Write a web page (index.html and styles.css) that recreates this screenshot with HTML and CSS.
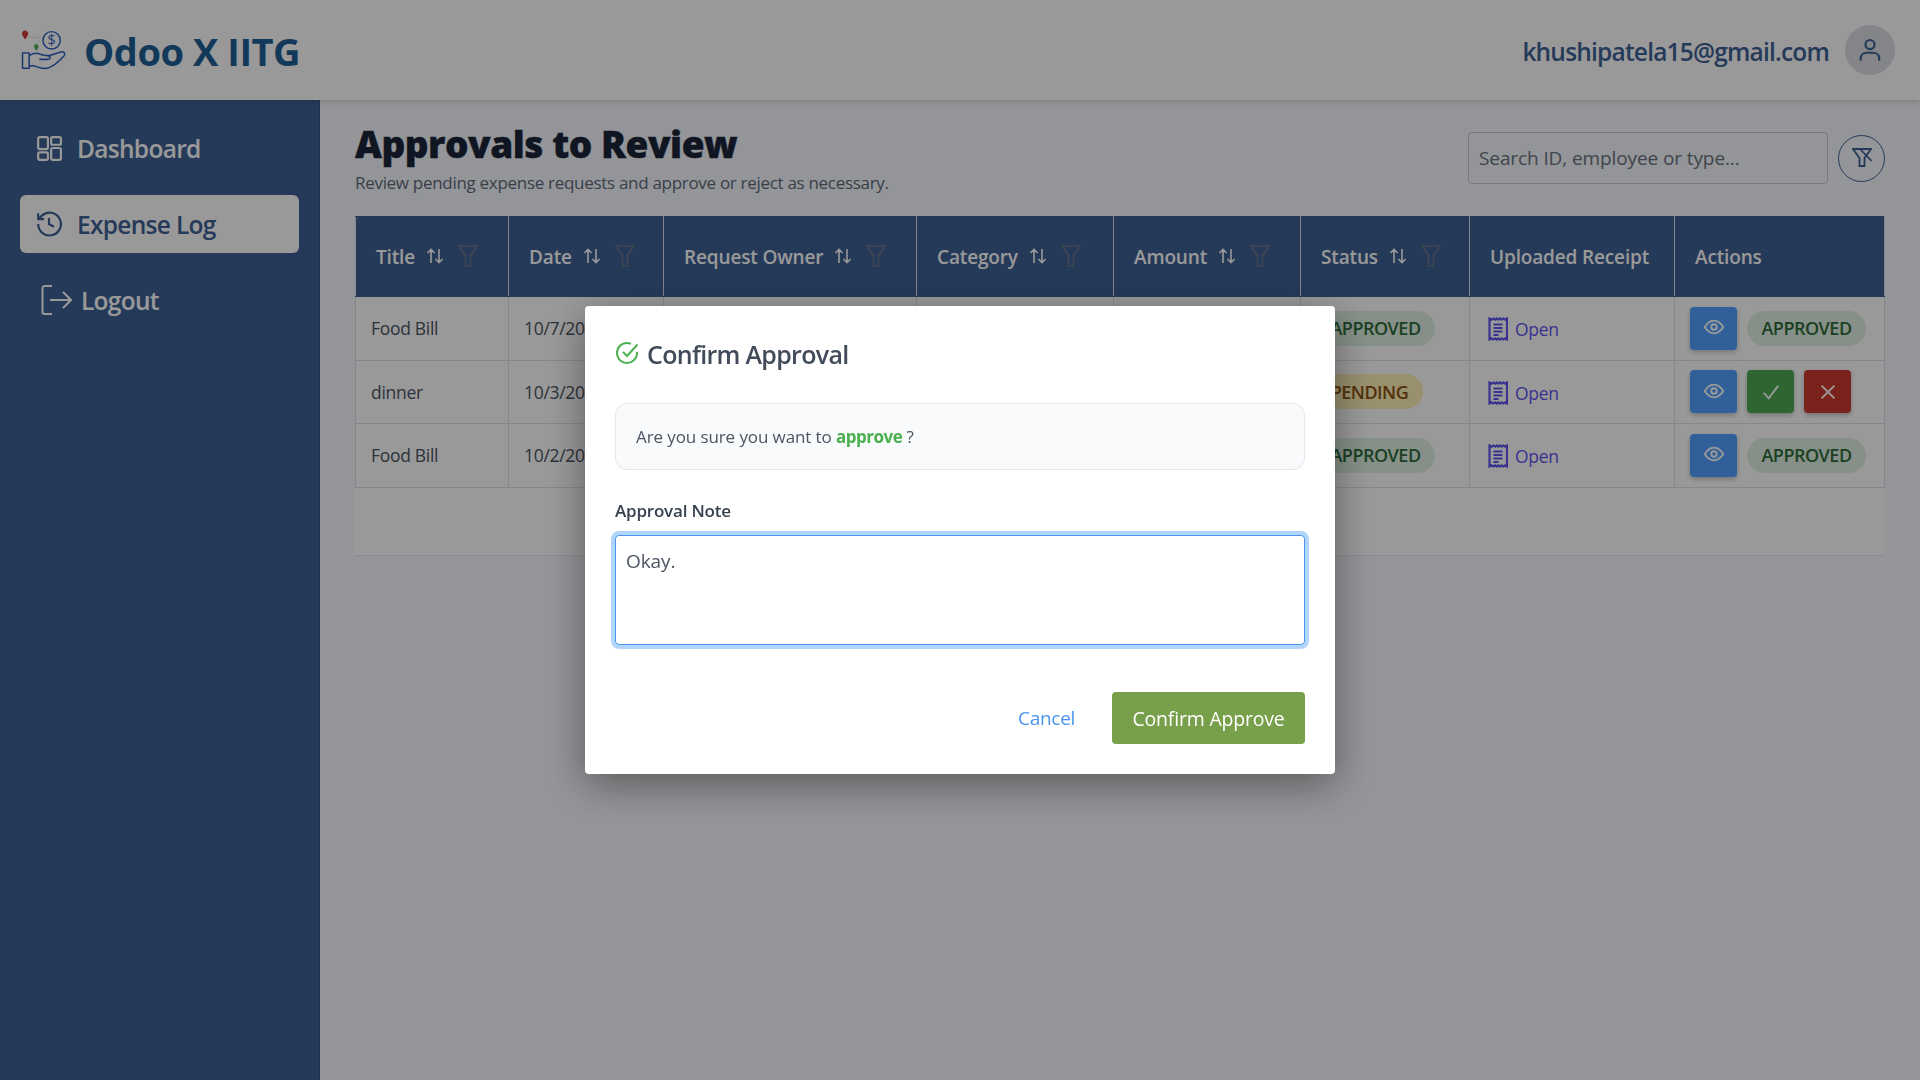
FILE: index.html
```html
<!DOCTYPE html>
<html lang="en">
<head>
<meta charset="utf-8">
<title>Approvals to Review</title>
<link rel="stylesheet" href="styles.css">
</head>
<body>
<svg class="sprite" width="0" height="0" aria-hidden="true">
  <defs>
    <symbol id="sort" viewBox="0 0 18 16"><path d="M5 15V1.500M1.500 5 5 1.500 8.500 5M13 1v13.500M9.500 11l3.500 3.500 3.500-3.500" fill="none" stroke="currentColor" stroke-width="1.600"/></symbol>
    <symbol id="funnel" viewBox="0 0 20 22"><path d="M1 1h18l-6.500 9.500V21h-5V10.500Z" fill="none" stroke="currentColor" stroke-width="1.500"/></symbol>
    <symbol id="receipt" viewBox="0 0 20 24"><path d="M1.500 1.500l2 1.200 2-1.200 2 1.200 1.500-1.200 1.500 1.200 1.500-1.200 1.500 1.200 2-1.200 2 1.200 1.500-1.200v21l-1.500-1.200-2 1.200-2-1.200-1.500 1.200-1.500-1.200-1.500 1.200-1.500-1.200-2 1.200-2-1.200-2 1.200Z" fill="none" stroke="currentColor" stroke-width="2.200"/><path d="M5.500 7.500h9M5.500 11h9M5.500 14.500h9M5.500 18h5" fill="none" stroke="currentColor" stroke-width="1.800"/></symbol>
    <symbol id="eye" viewBox="0 0 24 24"><path d="M2 12s3.500-7 10-7 10 7 10 7-3.500 7-10 7-10-7-10-7Z" fill="none" stroke="currentColor" stroke-width="2"/><circle cx="12" cy="12" r="3" fill="none" stroke="currentColor" stroke-width="2"/></symbol>
  </defs>
</svg>
<div class="app">
  <header class="topbar">
    <div class="brand">
      <svg class="logo" viewBox="0 0 48 44">
        <path d="M4 2.500c-1.800 0-3 1.300-3 3 0 2 3 5.500 3 5.500s3-3.500 3-5.500c0-1.700-1.200-3-3-3Z" transform="translate(0 -1)" fill="#d03a3a"/>
        <path d="M8 8h8.500c2.500 0 2.500 3 .5 4.500l-2.500 2c-1.500 1-1.500 2-1.500 3" fill="none" stroke="#c8c8c8" stroke-width=".8" stroke-dasharray="1.500 1"/>
        <path d="M15 16c-1.300 0-2.200.9-2.200 2.100 0 1.500 2.200 4 2.200 4s2.200-2.500 2.200-4c0-1.200-.9-2.100-2.200-2.100Z" transform="translate(0 -1)" fill="#4caf50"/>
        <circle cx="30" cy="11" r="8.500" fill="none" stroke="#3160c4" stroke-width="1.400"/>
        <text x="30" y="16" class="coin">$</text>
        <path d="M1.500 23.500h6.500v15H1.500ZM8 26c4-2.500 8-2.700 11-1.300 2.500 1.100 4.500 1.300 7.500 1.300 2.500 0 2.800 3.700 0 3.700h-8M26.500 26.500l12.500-4c3-1 5 1.500 3.200 3.700-3.500 4-9.500 9.500-14.500 11.600-4.500 1.800-9 .5-12.700-1-2.400-1-4.500-1-6-.6" fill="none" stroke="#3160c4" stroke-width="1.500" stroke-linejoin="round" stroke-linecap="round"/>
      </svg>
      <span class="brand-name">Odoo X IITG</span>
    </div>
    <div class="account">
      <span class="email">khushipatela15@gmail.com</span>
      <span class="avatar">
        <svg class="avatar-icon" viewBox="0 0 24 24"><circle cx="12" cy="7" r="4.200"/><path d="M3.500 22v-2.500c0-3 2.500-5 5.500-5h6c3 0 5.500 2 5.500 5V22"/></svg>
      </span>
    </div>
  </header>
  <div class="body-row">
    <aside class="sidebar">
      <nav class="nav">
        <a class="nav-item">
          <svg class="nav-icon" viewBox="0 0 24 24"><rect x="2" y="2" width="9" height="11" rx="1.500"/><rect x="14" y="2" width="9" height="7" rx="1.500"/><rect x="14" y="12" width="9" height="11" rx="1.500"/><rect x="2" y="16" width="9" height="7" rx="1.500"/></svg>
          Dashboard
        </a>
        <a class="nav-item nav-active">
          <svg class="nav-icon" viewBox="0 0 24 24"><path d="M2 12a10.500 10.500 0 1 0 3.200-7.500L2 7.500"/><path d="M2 2v5.500h5.500"/><path d="M12 6.500V12l4.500 2.500"/></svg>
          Expense Log
        </a>
        <a class="nav-item nav-logout">
          <svg class="logout-icon" viewBox="0 0 32 32"><path d="M12 2H4.500A2 2 0 0 0 2.500 4v24a2 2 0 0 0 2 2H12"/><path d="M10 16h21M23 8l8 8-8 8"/></svg>
          Logout
        </a>
      </nav>
    </aside>
    <main class="main">
      <div class="page-head">
        <div>
          <h1 class="page-title">Approvals to Review</h1>
          <p class="page-sub">Review pending expense requests and approve or reject as necessary.</p>
        </div>
        <div class="tools">
          <input class="search" type="text" placeholder="Search ID, employee or type...">
          <button class="filter-btn" type="button" aria-label="Clear filters">
            <svg class="filter-icon" viewBox="0 0 20 20"><path d="M1 1h18L12.500 10v8h-5v-8Z"/><path d="M8 1l11.500 12"/></svg>
          </button>
        </div>
      </div>
      <div class="table-card">
        <table class="grid">
          <colgroup>
            <col class="c-title"><col class="c-date"><col class="c-owner"><col class="c-cat"><col class="c-amt"><col class="c-status"><col class="c-receipt"><col class="c-actions">
          </colgroup>
          <thead>
            <tr>
              <th><span class="th-in">Title<svg class="i-sort"><use href="#sort"/></svg><svg class="i-funnel"><use href="#funnel"/></svg></span></th>
              <th><span class="th-in">Date<svg class="i-sort"><use href="#sort"/></svg><svg class="i-funnel"><use href="#funnel"/></svg></span></th>
              <th><span class="th-in">Request Owner<svg class="i-sort"><use href="#sort"/></svg><svg class="i-funnel"><use href="#funnel"/></svg></span></th>
              <th><span class="th-in">Category<svg class="i-sort"><use href="#sort"/></svg><svg class="i-funnel"><use href="#funnel"/></svg></span></th>
              <th><span class="th-in">Amount<svg class="i-sort"><use href="#sort"/></svg><svg class="i-funnel"><use href="#funnel"/></svg></span></th>
              <th><span class="th-in">Status<svg class="i-sort"><use href="#sort"/></svg><svg class="i-funnel"><use href="#funnel"/></svg></span></th>
              <th>Uploaded Receipt</th>
              <th>Actions</th>
            </tr>
          </thead>
          <tbody>
            <tr>
              <td>Food Bill</td><td>10/7/2025</td><td></td><td></td><td></td>
              <td class="td-status"><span class="pill pill-ok">APPROVED</span></td>
              <td class="td-receipt"><a class="open"><svg class="i-receipt"><use href="#receipt"/></svg>Open</a></td>
              <td class="td-actions"><div class="acts"><button class="act act-view" type="button"><svg class="i-eye"><use href="#eye"/></svg></button><span class="pill pill-ok">APPROVED</span></div></td>
            </tr>
            <tr>
              <td>dinner</td><td>10/3/2025</td><td></td><td></td><td></td>
              <td class="td-status"><span class="pill pill-wait">PENDING</span></td>
              <td class="td-receipt"><a class="open"><svg class="i-receipt"><use href="#receipt"/></svg>Open</a></td>
              <td class="td-actions"><div class="acts"><button class="act act-view" type="button"><svg class="i-eye"><use href="#eye"/></svg></button><button class="act act-yes" type="button"><svg class="i-mark" viewBox="0 0 24 24"><path d="M4 13l5.500 6L20 5"/></svg></button><button class="act act-no" type="button"><svg class="i-mark" viewBox="0 0 24 24"><path d="M5 5l14 14M19 5 5 19"/></svg></button></div></td>
            </tr>
            <tr>
              <td>Food Bill</td><td>10/2/2025</td><td></td><td></td><td></td>
              <td class="td-status"><span class="pill pill-ok">APPROVED</span></td>
              <td class="td-receipt"><a class="open"><svg class="i-receipt"><use href="#receipt"/></svg>Open</a></td>
              <td class="td-actions"><div class="acts"><button class="act act-view" type="button"><svg class="i-eye"><use href="#eye"/></svg></button><span class="pill pill-ok">APPROVED</span></div></td>
            </tr>
          </tbody>
        </table>
        <div class="table-foot"></div>
      </div>
    </main>
  </div>
</div>
<div class="overlay">
  <section class="modal">
    <h2 class="modal-title">
      <svg class="check-circle" viewBox="0 0 24 24"><path d="M22 11v1a10 10 0 1 1-6-9.200"/><path d="M8 11l4 4L22.500 3.500"/></svg>
      Confirm Approval
    </h2>
    <div class="modal-box">Are you sure you want to <b class="approve-word">approve</b> ?</div>
    <label class="note-label" for="note">Approval Note</label>
    <textarea class="note" id="note">Okay.</textarea>
    <div class="modal-actions">
      <button class="cancel" type="button">Cancel</button>
      <button class="confirm" type="button">Confirm Approve</button>
    </div>
  </section>
</div>
</body>
</html>
```
FILE: styles.css
```css
* { box-sizing: border-box; }
html, body { margin: 0; height: 100%; overflow: hidden; }
body { font-family: "Open Sans", "Noto Sans", "Liberation Sans", sans-serif; background: #f5f8fd; color: #374151; }
.sprite { position: absolute; }
.app { display: flex; flex-direction: column; height: 1080px; }

.topbar { height: 100px; background: #fff; display: flex; align-items: center; justify-content: space-between; padding: 0 25px 0 21px; box-shadow: 0 2px 5px rgba(0,0,0,.15); position: relative; z-index: 2; flex: none; }
.brand { display: flex; align-items: center; gap: 14px; padding-top: 2px; }
.logo { width: 49px; height: 45px; }
.coin { font-size: 14px; fill: #3160c4; text-anchor: middle; font-family: "Open Sans", sans-serif; }
.brand-name { font-size: 38px; font-weight: 700; color: #1f5f94; letter-spacing: -.45px; }
.account { display: flex; align-items: center; gap: 16px; }
.email { font-size: 24.500px; font-weight: 600; color: #3f6295; letter-spacing: -.8px; padding-top: 2px; }
.avatar { width: 50px; height: 50px; border-radius: 50%; background: #dcdee3; display: flex; align-items: center; justify-content: center; }
.avatar-icon { width: 26px; height: 26px; fill: none; stroke: #3f6295; stroke-width: 2; }

.body-row { display: flex; flex: 1; min-height: 0; }
.sidebar { width: 320px; flex: none; background: #3f6295; border-right: 1px solid #355480; padding-top: 19px; }
.nav { display: flex; flex-direction: column; gap: 18px; padding: 0 20px; }
.nav-item { height: 58px; display: flex; align-items: center; gap: 15px; padding-left: 16px; width: 279px; border-radius: 6px; font-size: 24.500px; font-weight: 600; color: #fff; letter-spacing: -.7px; }
.nav-active { background: #fff; color: #3f6295; }
.nav-logout { gap: 9px; padding-left: 20px; }
.nav-icon { width: 26px; height: 26px; fill: none; stroke: currentColor; stroke-width: 2; }
.logout-icon { width: 32px; height: 32px; fill: none; stroke: currentColor; stroke-width: 2; }

.main { flex: 1; padding: 21px 35px 0; min-width: 0; }
.page-head { display: flex; justify-content: space-between; align-items: flex-start; height: 95px; }
.page-title { margin: 0; font-size: 37px; line-height: 46px; font-weight: 800; color: #1b2638; letter-spacing: -.46px; -webkit-text-stroke: .4px currentColor; }
.page-sub { margin: 4px 0 0; font-size: 17px; line-height: 24px; color: #5f6a7b; letter-spacing: -.3px; }
.tools { display: flex; align-items: center; gap: 10px; margin-top: 11px; }
.search { width: 360px; height: 52px; border: 1px solid #c9ccd3; border-radius: 4px; background: transparent; padding: 0 10px; font: 400 19px "Open Sans", sans-serif; letter-spacing: -.1px; color: #374151; }
.search::placeholder { color: #6b7280; opacity: 1; }
.filter-btn { width: 47px; height: 47px; border-radius: 50%; border: 1px solid #3f6295; background: transparent; padding: 0; display: flex; align-items: center; justify-content: center; }
.filter-icon { width: 20px; height: 20px; fill: none; stroke: #3f6295; stroke-width: 1.800; }

.table-card { background: #fff; border-bottom: 1px solid #e5e7eb; width: 1529px; }
.grid { width: 1529px; border-collapse: collapse; table-layout: fixed; }
.c-title { width: 153px; } .c-date { width: 155px; } .c-owner { width: 253px; } .c-cat { width: 197px; }
.c-amt { width: 187px; } .c-status { width: 169px; } .c-receipt { width: 205px; } .c-actions { width: 210px; }
.grid th { height: 80px; background: #3f6295; color: #fff; text-align: left; padding: 0 0 0 20px; font-size: 19px; font-weight: 600; letter-spacing: -.15px; border: 1px solid #e5e7eb; border-top-color: #3f6295; border-bottom-color: #3f6295; border-right-color: #d8dce3; }
.th-in { display: flex; align-items: center; }
.i-sort { width: 18px; height: 16px; margin-left: 11px; color: #fff; margin-top: -2px; }
.i-funnel { width: 20px; height: 22px; margin-left: 14px; color: #6c7689; margin-top: -2px; }
.grid td { height: 63.500px; padding: 0 0 0 15px; background: #fff; border: 1px solid #e0e2e6; font-size: 17.500px; color: #4b5563; letter-spacing: -.3px; }
.td-status { padding-left: 15px; }
.grid .td-receipt { padding-left: 18px; }
.pill { display: inline-flex; align-items: center; justify-content: center; height: 35px; border-radius: 18px; padding: 0; font-size: 18px; font-weight: 600; letter-spacing: -.5px; vertical-align: middle; }
.pill-ok { width: 119px; background: #dff1e3; color: #2e6b3a; }
.pill-wait { width: 107px; background: #fff0b8; color: #8a5410; }
.open { display: inline-flex; align-items: center; gap: 7px; color: #6254ee; font-size: 17.500px; vertical-align: middle; }
.i-receipt { width: 20px; height: 24px; color: #6254ee; }
.acts { display: flex; align-items: center; gap: 10px; }
.act { width: 47px; height: 43px; border: 0; border-radius: 4px; padding: 0; display: flex; align-items: center; justify-content: center; color: #fff; box-shadow: 0 2px 5px rgba(0,0,0,.25); }
.act-view { background: #519fff; }
.act-yes { background: #4ea956; }
.act-no { background: #cb3a30; }
.i-eye { width: 22px; height: 22px; margin-top: -2px; }
.i-mark { width: 22px; height: 22px; fill: none; stroke: currentColor; stroke-width: 2; }
.table-foot { height: 67px; }

.overlay { position: fixed; inset: 0; background: rgba(0,0,0,.4); display: flex; align-items: center; justify-content: center; z-index: 10; }
.modal { width: 750px; height: 468px; background: #fff; border-radius: 4px; padding: 30px; display: flex; flex-direction: column; box-shadow: 0 10px 40px rgba(0,0,0,.4); }
.modal-title { margin: 0; height: 36px; display: flex; align-items: center; gap: 8px; font-size: 25px; font-weight: 600; color: #414b5a; letter-spacing: -.7px; }
.check-circle { width: 24px; height: 24px; fill: none; stroke: #4caf50; stroke-width: 2; margin-top: -3px; }
.modal-box { margin-top: 31px; height: 67px; border: 1px solid #e5e7eb; border-radius: 12px; background: #f9fafb; display: block; line-height: 65px; padding-left: 20px; font-size: 17px; color: #4b5563; letter-spacing: -.1px; }
.approve-word { color: #4caf50; font-weight: 700; letter-spacing: -.5px; }
.note-label { margin-top: 30px; height: 22px; line-height: 22px; font-size: 17px; font-weight: 600; color: #374151; letter-spacing: -.2px; }
.note { margin-top: 13px; width: 690px; height: 110px; border: 1px solid #4a96ef; outline: 0; box-shadow: 0 0 0 4px #b2d6fb; border-radius: 4px; padding: 12px 10px; resize: none; font: 400 19px "Open Sans", sans-serif; color: #4b5563; letter-spacing: -.1px; }
.modal-actions { margin-top: auto; display: flex; justify-content: flex-end; align-items: center; gap: 37px; }
.cancel { border: 0; background: none; padding: 0; font: 400 19px "Open Sans", sans-serif; color: #4b93ef; letter-spacing: -.3px; }
.confirm { width: 193px; height: 52px; border: 0; border-radius: 4px; background: #789f4a; color: #fff; font: 400 19.500px "Open Sans", sans-serif; letter-spacing: -.2px; padding: 0; }
```
